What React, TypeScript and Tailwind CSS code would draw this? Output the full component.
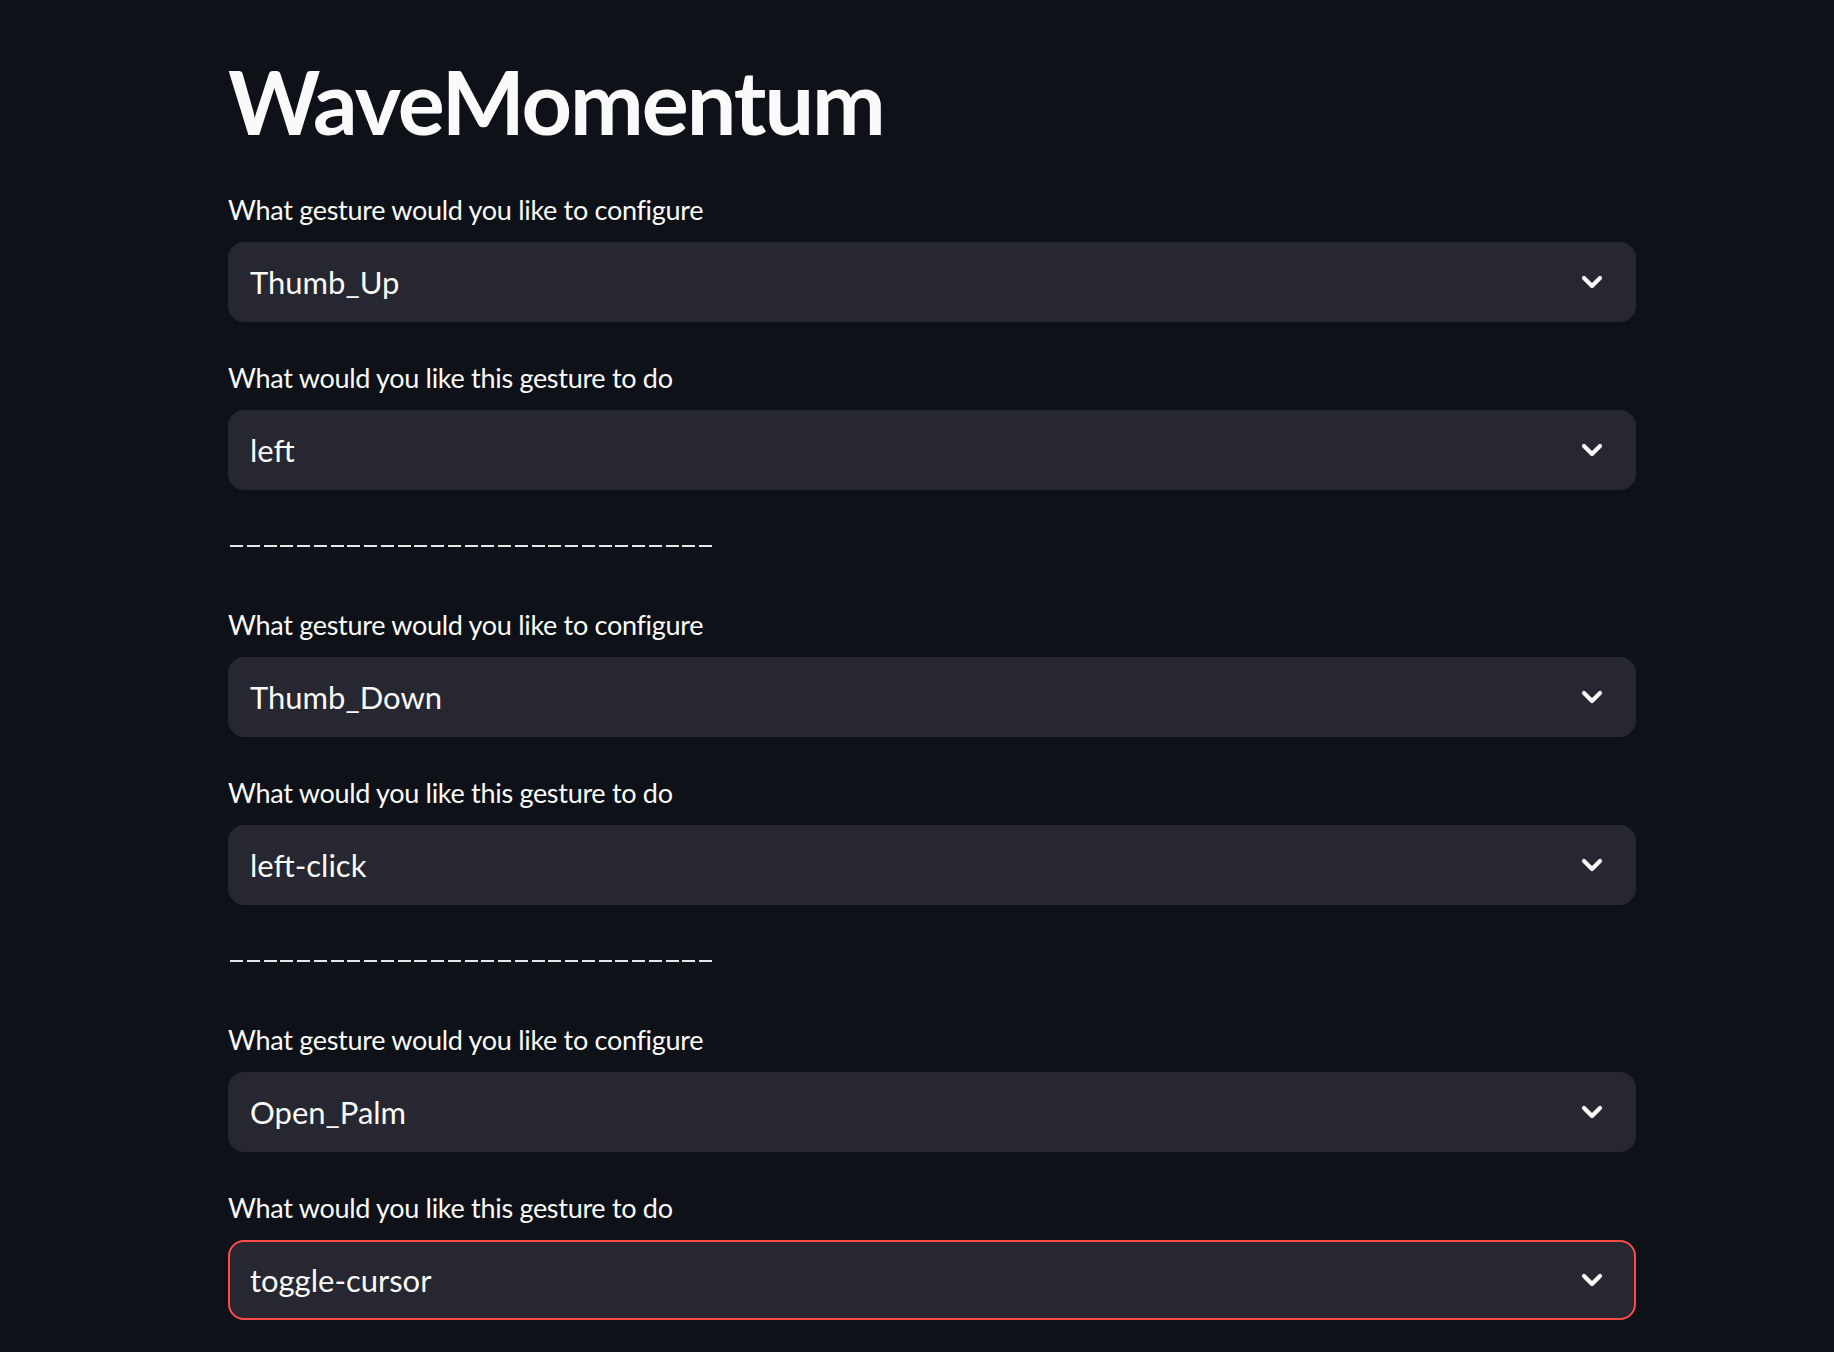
import React from 'react';

interface GestureRow {
  gesture: string;
  action: string;
  focused?: boolean;
}

const rows: GestureRow[] = [
  { gesture: 'Thumb_Up', action: 'left' },
  { gesture: 'Thumb_Down', action: 'left-click' },
  { gesture: 'Open_Palm', action: 'toggle-cursor', focused: true },
];

const font = { fontFamily: 'Lato, "Noto Sans", sans-serif' };

function Chevron() {
  return (
    <svg width="22" height="14" viewBox="0 0 22 14" fill="none" className="shrink-0">
      <path d="M3 3 L11 11 L19 3" stroke="#fafafa" strokeWidth="4.2" strokeLinecap="round" strokeLinejoin="round" />
    </svg>
  );
}

function SelectBox({ label, value, focused }: { label: string; value: string; focused?: boolean }) {
  return (
    <div className="flex flex-col">
      <div className="h-[48px] mb-[8px] flex items-center text-[27px] tracking-[-0.3px] text-[#fafafa]">{label}</div>
      <div
        className={`h-[80px] rounded-[16px] bg-[#262730] border-2 flex items-center justify-between pl-[20px] pr-[31px] ${
          focused ? 'border-[#ff4b4b]' : 'border-[#262730]'
        }`}
      >
        <span className="text-[31px] text-[#fafafa]">{value}</span>
        <Chevron />
      </div>
    </div>
  );
}

function Divider() {
  return (
    <div className="h-[47px] flex items-center gap-[3.75px] pl-[2px] pt-[1px]">
      {Array.from({ length: 29 }).map((_, i) => (
        <div key={i} className="w-[13px] h-[2px] bg-[#e6e6e6]" />
      ))}
    </div>
  );
}

export default function App() {
  return (
    <div className="min-h-screen bg-[#0e1117] text-[#fafafa]" style={font}>
      <div className="ml-[228px] w-[1408px] pt-[48px] flex flex-col gap-[32px]">
        {/* Title */}
        <h1 className="h-[106px] flex items-center text-[88px] font-bold leading-none tracking-[-2px]">WaveMomentum</h1>

        {rows.map((row, i) => (
          <React.Fragment key={row.gesture}>
            {i > 0 && <Divider />}
            <SelectBox label="What gesture would you like to configure" value={row.gesture} />
            <SelectBox label="What would you like this gesture to do" value={row.action} focused={row.focused} />
          </React.Fragment>
        ))}
      </div>
    </div>
  );
}
